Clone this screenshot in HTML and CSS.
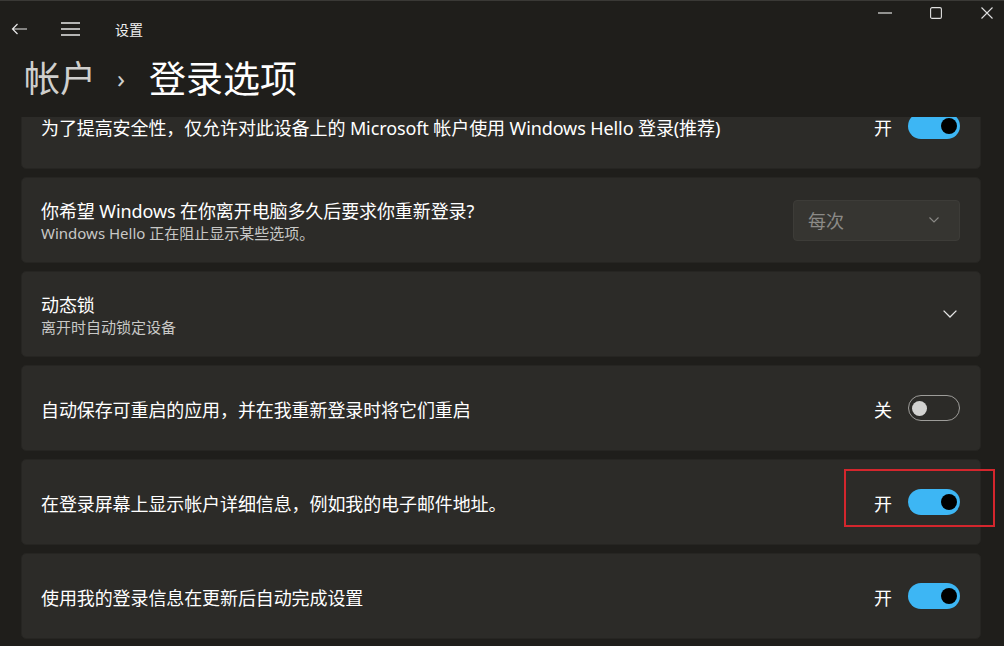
FILE: index.html
```html
<!DOCTYPE html>
<html lang="zh-CN">
<head>
    <meta charset="UTF-8">
    <meta name="viewport" content="width=device-width, initial-scale=1.0">
    <title>设置</title>
    <link rel="stylesheet" href="styles.css">
</head>
<body>
    <div class="window">
        <!-- 标题栏 -->
        <div class="titlebar">
            <div class="nav-btn back">
                <svg width="17" height="12" viewBox="0 0 17 12"><path d="M16 6H1.5M6.5 1L1.5 6l5 5" fill="none" stroke="#e8e8e8" stroke-width="1.2"/></svg>
            </div>
            <div class="nav-btn menu">
                <svg width="19" height="14" viewBox="0 0 19 14"><path d="M0 1h19M0 7h19M0 13h19" fill="none" stroke="#e8e8e8" stroke-width="1.3"/></svg>
            </div>
            <div class="app-name">设置</div>
            <div class="caption">
                <div class="cap-btn">
                    <svg width="14" height="2" viewBox="0 0 14 2"><path d="M0 1h14" stroke="#e0e0e0" stroke-width="1.2"/></svg>
                </div>
                <div class="cap-btn">
                    <svg width="12" height="12" viewBox="0 0 12 12"><rect x="0.6" y="0.6" width="10.8" height="10.8" rx="1.5" fill="none" stroke="#e0e0e0" stroke-width="1.1"/></svg>
                </div>
                <div class="cap-btn">
                    <svg width="12" height="12" viewBox="0 0 12 12"><path d="M0.5 0.5l11 11M11.5 0.5l-11 11" stroke="#e0e0e0" stroke-width="1.1"/></svg>
                </div>
            </div>
        </div>

        <!-- 页面标题 -->
        <div class="page-header">
            <span class="crumb">帐户</span>
            <span class="crumb-sep">›</span>
            <span class="crumb-current">登录选项</span>
        </div>

        <!-- 设置列表（已向下滚动） -->
        <div class="content">
            <div class="list">
                <div class="card">
                    <div class="card-text">
                        <div class="card-title">为了提高安全性，仅允许对此设备上的 Microsoft 帐户使用 Windows Hello 登录(推荐)</div>
                    </div>
                    <div class="state">开</div>
                    <div class="toggle on"><div class="knob"></div></div>
                </div>

                <div class="card">
                    <div class="card-text">
                        <div class="card-title">你希望 Windows 在你离开电脑多久后要求你重新登录?</div>
                        <div class="card-sub">Windows Hello 正在阻止显示某些选项。</div>
                    </div>
                    <div class="dropdown">
                        <span>每次</span>
                        <svg width="10" height="6" viewBox="0 0 10 6"><path d="M0.5 0.5L5 5l4.5-4.5" fill="none" stroke="#8b8a87" stroke-width="1.1"/></svg>
                    </div>
                </div>

                <div class="card">
                    <div class="card-text">
                        <div class="card-title">动态锁</div>
                        <div class="card-sub">离开时自动锁定设备</div>
                    </div>
                    <div class="expand">
                        <svg width="14" height="8" viewBox="0 0 14 8"><path d="M0.6 0.6L7 7l6.4-6.4" fill="none" stroke="#e6e6e6" stroke-width="1.3"/></svg>
                    </div>
                </div>

                <div class="card">
                    <div class="card-text">
                        <div class="card-title">自动保存可重启的应用，并在我重新登录时将它们重启</div>
                    </div>
                    <div class="state">关</div>
                    <div class="toggle off"><div class="knob"></div></div>
                </div>

                <div class="card">
                    <div class="card-text">
                        <div class="card-title">在登录屏幕上显示帐户详细信息，例如我的电子邮件地址。</div>
                    </div>
                    <div class="state">开</div>
                    <div class="toggle on"><div class="knob"></div></div>
                </div>

                <div class="card">
                    <div class="card-text">
                        <div class="card-title">使用我的登录信息在更新后自动完成设置</div>
                    </div>
                    <div class="state">开</div>
                    <div class="toggle on"><div class="knob"></div></div>
                </div>
            </div>
        </div>

        <!-- 标注框 -->
        <div class="highlight"></div>
    </div>
</body>
</html>
```

FILE: styles.css
```css
/* 基础 */
body {
    margin: 0;
    background-color: #1f1e1b;
    font-family: "Noto Sans", "Noto Sans CJK SC", sans-serif;
    color: #ffffff;
}
.window {
    position: relative;
    width: 1004px;
    height: 646px;
    display: flex;
    flex-direction: column;
    overflow: hidden;
    background-color: #1f1e1b;
    border-top: 1px solid #3a3936;
    box-sizing: border-box;
}

/* 标题栏 */
.titlebar {
    height: 55px;
    display: flex;
    align-items: center;
    flex-shrink: 0;
}
.nav-btn {
    display: flex;
    align-items: center;
    justify-content: center;
}
.back {
    margin-left: 10px;
    width: 18px;
}
.menu {
    margin-left: 33px;
    width: 19px;
}
.app-name {
    margin-left: 35px;
    font-size: 14px;
    color: #f0f0f0;
}
.caption {
    margin-left: auto;
    align-self: flex-start;
    display: flex;
    gap: 27px;
    margin-right: 5px;
    height: 24px;
}
.cap-btn {
    width: 24px;
    display: flex;
    align-items: center;
    justify-content: center;
}

/* 页面标题 */
.page-header {
    height: 61px;
    flex-shrink: 0;
    padding-left: 24px;
    display: flex;
    align-items: flex-start;
    font-size: 36px;
    line-height: 45px;
}
.crumb {
    color: #cfcfcd;
}
.crumb-sep {
    color: #cfcfcd;
    font-size: 26px;
    margin: 0 24px 0 21px;
}
.crumb-current {
    color: #ffffff;
    font-size: 37px;
}

/* 设置列表 */
.content {
    flex: 1;
    overflow: hidden;
}
.list {
    margin-top: -34px;
    padding: 0 23px 0 21px;
    display: flex;
    flex-direction: column;
    gap: 8px;
}
.card {
    height: 86px;
    box-sizing: border-box;
    background-color: #2c2b28;
    border: 1px solid #262522;
    border-radius: 5px;
    display: flex;
    align-items: center;
    padding: 0 20px 0 19px;
}
.card-text {
    flex: 1;
    padding-top: 4px;
}
.card-title {
    font-size: 18px;
    line-height: 22px;
    color: #ffffff;
    letter-spacing: -0.1px;
}
.card-sub {
    font-size: 15px;
    line-height: 22px;
    color: #c8c8c6;
}
.state {
    font-size: 18px;
    margin-right: 16px;
    padding-top: 2px;
}

/* 开关 */
.toggle {
    width: 52px;
    height: 26px;
    box-sizing: border-box;
    border-radius: 13px;
    display: flex;
    align-items: center;
}
.toggle.on {
    background-color: #3db6f4;
    justify-content: flex-end;
    padding-right: 3px;
}
.toggle.on .knob {
    width: 16px;
    height: 16px;
    border-radius: 50%;
    background-color: #000000;
}
.toggle.off {
    border: 1.5px solid #9d9c99;
    padding-left: 3px;
}
.toggle.off .knob {
    width: 15px;
    height: 15px;
    border-radius: 50%;
    background-color: #d2d2d0;
}

/* 下拉框 */
.dropdown {
    width: 167px;
    height: 41px;
    box-sizing: border-box;
    background-color: #363531;
    border: 1px solid #3d3c38;
    border-radius: 4px;
    display: flex;
    align-items: center;
    justify-content: space-between;
    padding: 0 20px 0 14px;
    font-size: 18px;
    color: #8b8a87;
}
.expand {
    width: 14px;
    display: flex;
    margin-right: 3px;
}

/* 红色标注框 */
.highlight {
    position: absolute;
    left: 844px;
    top: 468px;
    width: 151px;
    height: 58px;
    box-sizing: border-box;
    border: 2px solid #d4262d;
}
```
